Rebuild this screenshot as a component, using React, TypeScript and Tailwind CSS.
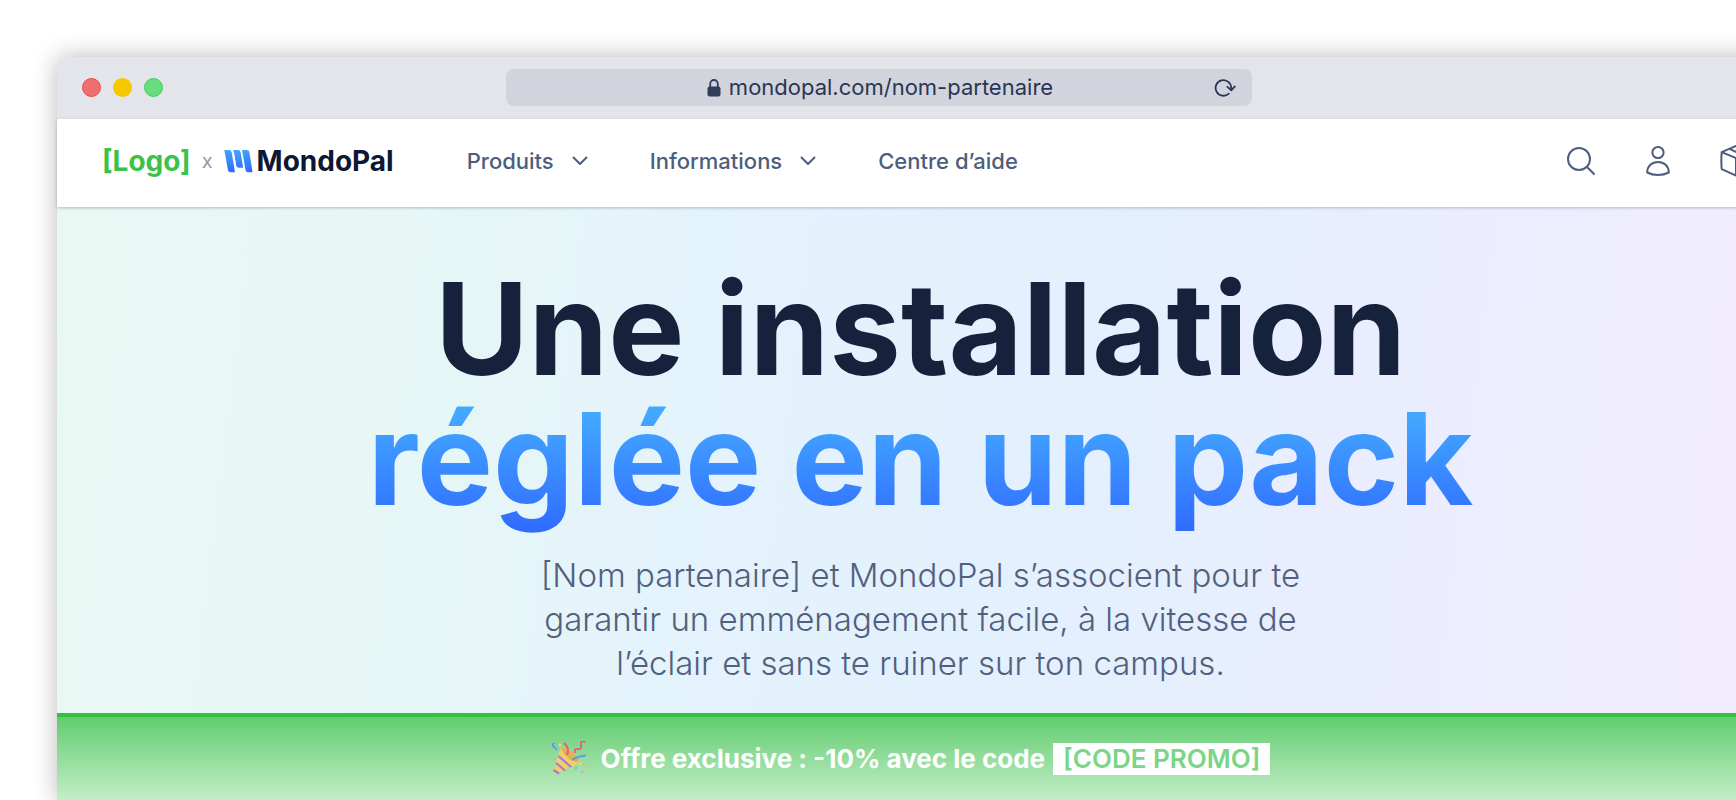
import React from "react";

function MondoMark() {
  return (
    <svg width="29" height="24" viewBox="0 0 29 24" aria-hidden="true">
      <defs>
        <linearGradient id="mark" x1="0" y1="0" x2="0" y2="24" gradientUnits="userSpaceOnUse">
          <stop offset="0" stopColor="#43a6ff" />
          <stop offset="1" stopColor="#2f68ff" />
        </linearGradient>
      </defs>
      <g fill="url(#mark)">
        <path d="M0.300 1H5Q7.300 1 7.700 3.200L11 23.300H6.600Q4.300 23.300 3.900 21Z" />
        <path d="M9.200 1H14Q16.200 1 16.600 3.200L19.200 18.800H15Q12.600 18.800 12.200 16.600L10.400 5Z" />
        <path d="M18 1H22.700Q25 1 25.400 3.200L28.600 23.300H24.200Q21.900 23.300 21.500 21Z" />
      </g>
    </svg>
  );
}

function Lock() {
  return (
    <svg width="14" height="18" viewBox="0 0 14 18" fill="none" aria-hidden="true">
      <rect x="0.500" y="7.500" width="13" height="10" rx="2" fill="#333c5a" />
      <path d="M3.200 8V4.800a3.800 3.800 0 0 1 7.600 0V8" stroke="#333c5a" strokeWidth="1.800" />
    </svg>
  );
}

function Reload() {
  return (
    <svg width="22" height="20" viewBox="0 0 22 20" fill="none" stroke="#2b3553" strokeWidth="1.800" strokeLinecap="round" strokeLinejoin="round" aria-hidden="true">
      <path d="M14.800 15.600A7.800 7.800 0 1 1 17.200 9.600V12" />
      <path d="M13.400 8.800L17.300 12.300L20.800 8.400" />
    </svg>
  );
}

function Chevron() {
  return (
    <svg width="16" height="10" viewBox="0 0 16 10" fill="none" stroke="#4d5d7c" strokeWidth="2" strokeLinecap="round" strokeLinejoin="round" aria-hidden="true">
      <path d="M1.500 1.500L8 8L14.500 1.500" />
    </svg>
  );
}

function Search() {
  return (
    <svg width="30" height="30" viewBox="0 0 30 30" fill="none" stroke="#4d5d7c" strokeWidth="2" strokeLinecap="round" aria-hidden="true">
      <circle cx="13" cy="13" r="11" />
      <path d="M20.800 20.800L28 28" />
    </svg>
  );
}

function User() {
  return (
    <svg width="24" height="32" viewBox="0 0 24 32" fill="none" stroke="#4d5d7c" strokeWidth="2" strokeLinejoin="round" aria-hidden="true">
      <circle cx="12" cy="7.500" r="5.600" />
      <path d="M1.200 27.500C1.200 21 6 17 12 17S22.800 21 22.800 27.500C16.500 30.700 7.500 30.700 1.200 27.500Z" />
    </svg>
  );
}

function Box() {
  return (
    <svg width="32" height="34" viewBox="0 0 32 34" fill="none" stroke="#4d5d7c" strokeWidth="2" strokeLinejoin="round" aria-hidden="true">
      <path d="M1.700 8.200L16 2L30.300 8.200V25.200L16 31.500L1.700 25.200Q1 17 1.700 8.200Z" />
      <path d="M1.700 8.200L16 14.200L30.300 8.200M16 14.200V31.500M9.500 4.800L23 11" />
    </svg>
  );
}

function Party() {
  return (
    <svg width="36" height="36" viewBox="0 0 36 36" fill="none" aria-hidden="true">
      <path d="M1 34.500L9.500 7Q14 4 22 12T28 22Z" fill="#f2d060" />
      <path d="M10 7Q16 6 22 12T28 21Q22 22 16 16T10 7Z" fill="#d9b455" />
      <path d="M7.500 15L20 26M5 22L14 29.500M2.500 29L8 32.500" stroke="#a07be0" strokeWidth="2.200" />
      <path d="M16 14Q19 7 13 2" stroke="#ee5f7c" strokeWidth="2.200" />
      <path d="M3.500 2Q0 4 3 6T5 9M21 19Q27 15 35 14.500" stroke="#6d8ff0" strokeWidth="1.800" />
      <path d="M24 12Q23 7 27 8T30 3.500T34 1.500" stroke="#e0607f" strokeWidth="1.800" />
      <g fill="#ee9ac0">
        <circle cx="3.500" cy="18" r="1.200" />
        <circle cx="31" cy="31" r="1.300" />
      </g>
      <circle cx="33" cy="23" r="1.200" fill="#f0b45c" />
      <circle cx="29" cy="23" r="1.200" fill="#f6df6c" />
      <circle cx="25" cy="27" r="1.200" fill="#8fa6f5" />
      <circle cx="9" cy="4" r="1.200" fill="#f6df6c" />
    </svg>
  );
}

export default function App() {
  return (
    <div className="min-h-screen overflow-hidden bg-white pt-[57px] pl-[57px] font-['Inter',sans-serif]">
      <div className="-mr-12 flex min-h-[743px] flex-col rounded-tl-lg shadow-[0_0_24px_rgba(0,0,0,0.28)]">
        <div className="flex items-center rounded-tl-lg bg-[#e4e5ea] pt-3 pb-[13px] pl-[25px]">
          <div className="flex w-[424px] gap-3">
            <span className="size-[19px] rounded-full border border-[#e94b4b] bg-[#ee6f6f]" />
            <span className="size-[19px] rounded-full bg-[#f5c800]" />
            <span className="size-[19px] rounded-full border border-[#45cc60] bg-[#67dd7e]" />
          </div>
          <div className="flex h-[37px] w-[746px] items-center rounded-lg bg-[#d1d4dd] pr-4 pl-10 text-[22px] text-[#2b3553]">
            <div className="flex flex-1 items-center justify-center gap-2">
              <Lock />
              <span>mondopal.com/nom-partenaire</span>
            </div>
            <button type="button" aria-label="Recharger"><Reload /></button>
          </div>
        </div>
        <header className="relative flex h-[88px] items-center bg-white pb-1 pl-[45px] text-[22px] text-[#4d5d7c] shadow-[0_1px_3px_rgba(60,90,120,0.35)]">
          <a href="#" className="flex items-center">
            <span className="text-[28px] font-bold text-[#3cc24a]">[Logo]</span>
            <span className="px-[11px] text-[20px] text-[#9499aa]">x</span>
            <MondoMark />
            <span className="pl-1 text-[28px] font-bold text-[#0e1733]">MondoPal</span>
          </a>
          <nav className="flex flex-1 items-center gap-[62px] pl-[73px] font-medium">
            <button type="button" className="flex items-center gap-[18px]">Produits <Chevron /></button>
            <button type="button" className="flex items-center gap-[18px]">Informations <Chevron /></button>
            <a href="#">Centre d’aide</a>
          </nav>
          <div className="flex items-center gap-[50px] pr-8">
            <button type="button" aria-label="Rechercher"><Search /></button>
            <button type="button" aria-label="Compte"><User /></button>
            <button type="button" aria-label="Commandes"><Box /></button>
          </div>
        </header>
        <main className="flex flex-col items-center bg-[linear-gradient(97deg,#e9f8f3_0%,#e6f7f6_20%,#e3f2fd_42%,#e3f0fe_58%,#ebedfe_78%,#f2edfe_96%)] pt-[57px] pb-7 text-center">
          <h1 className="text-[128px] leading-[130px] font-bold text-[#16213c]">
            Une installation
            <span className="block bg-[linear-gradient(180deg,#43a9ff_12%,#2f68ff_90%)] bg-clip-text pb-[29px] text-transparent">réglée en un pack</span>
          </h1>
          <p className="max-w-[800px] text-[33px] leading-[44px] font-light text-[#52607e]">
            [Nom partenaire] et MondoPal s’associent pour te garantir un emménagement facile, à la vitesse de l’éclair et sans te ruiner sur ton campus.
          </p>
        </main>
        <div className="flex flex-1 items-start justify-center border-t-4 border-[#35bf43] bg-[linear-gradient(180deg,#62cd6f,#c4edc9)] pt-6 pr-5 text-[26px] leading-8 font-bold text-white">
          <div className="flex items-center">
            <Party />
            <span className="pl-[14px]">Offre exclusive : -10% avec le code</span>
            <span className="ml-2 bg-white px-[10px] font-semibold text-[#7bd586]">[CODE PROMO]</span>
          </div>
        </div>
      </div>
    </div>
  );
}
